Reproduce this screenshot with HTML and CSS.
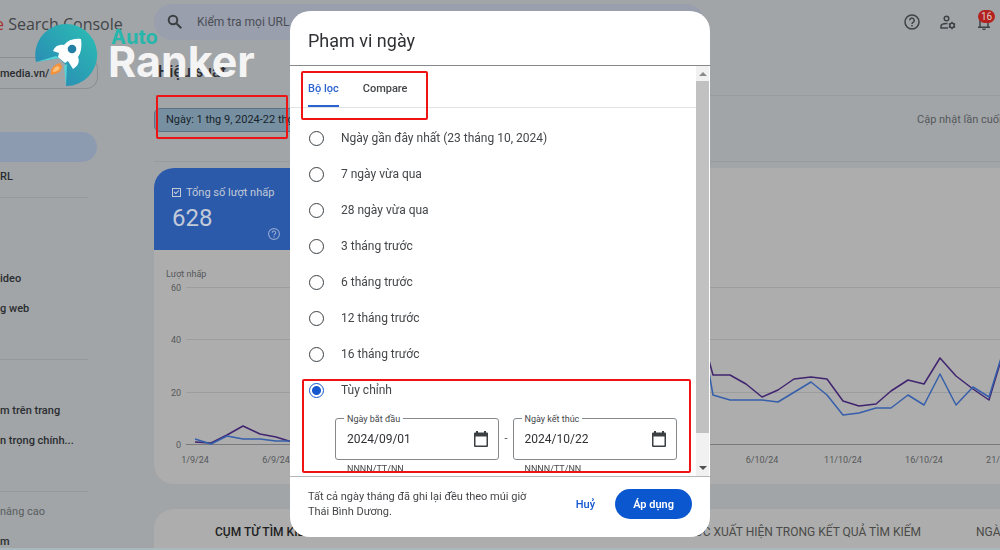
FILE: index.html
```html
<!DOCTYPE html>
<html lang="vi">
<head>
    <meta charset="UTF-8">
    <meta name="viewport" content="width=device-width, initial-scale=1.0">
    <title>Search Console</title>
    <link rel="stylesheet" href="styles.css">
</head>
<body>
    <header class="topbar">
        <div class="product"><span class="product-red">e</span> Search Console</div>
        <label class="search">
            <svg width="16" height="16" viewBox="0 0 16 16" fill="none" stroke="#3c4043" stroke-width="2"><circle cx="6" cy="6" r="4.3"/><path d="M9.3 9.3l5 5"/></svg>
            <input type="text" placeholder="Kiểm tra mọi URL" aria-label="Kiểm tra mọi URL">
        </label>
        <div class="top-icons">
            <button aria-label="Trợ giúp">
                <svg width="18" height="18" viewBox="0 0 18 18" fill="none" stroke="#3f4245" stroke-width="1.5"><circle cx="9" cy="9" r="7"/><path d="M6.8 7.4a2.2 2.2 0 1 1 3.5 1.7C9.4 9.7 9 10 9 10.9"/><path d="M9 12v1.5"/></svg>
            </button>
            <button aria-label="Người dùng">
                <svg width="18" height="18" viewBox="0 0 18 18" fill="none" stroke="#3f4245" stroke-width="1.5"><circle cx="7.5" cy="5.5" r="2.3"/><path d="M9 15H2v-1.6c0-1.8 2.5-2.9 5.5-2.9h1"/><circle cx="13" cy="12.5" r="2.2"/><path d="M13 8.8v1.5M13 14.7v1.5M9.8 10.6l1.3.8M14.9 13.6l1.3.8M9.8 14.4l1.3-.8M14.9 11.4l1.3-.8"/></svg>
            </button>
            <button class="bell" aria-label="Thông báo">
                <svg width="18" height="18" viewBox="0 0 18 18" fill="none" stroke="#3f4245" stroke-width="1.5"><path d="M3 14.2h12M5 14V8a4 4 0 0 1 8 0v6"/><path d="M7.5 16.3h3"/></svg>
                <span class="badge">16</span>
            </button>
        </div>
    </header>

    <div class="layout">
        <nav class="sidebar">
            <button class="property">media.vn/</button>
            <div class="nav-group first">
                <a class="active" href="#" aria-label="Hiệu suất"></a>
                <a href="#">RL</a>
            </div>
            <div class="nav-group">
                <a href="#">ideo</a>
                <a href="#">g web</a>
            </div>
            <div class="nav-group short">
                <a href="#">m trên trang</a>
                <a href="#">n trọng chính...</a>
            </div>
            <div class="nav-group last">
                <a class="muted" href="#">nâng cao</a>
                <a href="#">m</a>
            </div>
        </nav>

        <main class="main">
            <h1>Hiệu suất</h1>
            <div class="filters">
                <button class="chip">Ngày: 1 thg 9, 2024-22 thg 10, 2024</button>
                <span class="updated">Cập nhật lần cuối</span>
                <div class="mark mark-date"></div>
            </div>
            <section class="card">
                <div class="metric">
                    <label><input type="checkbox" checked>Tổng số lượt nhấp</label>
                    <div class="metric-value">628</div>
                    <svg class="metric-help" width="14" height="14" viewBox="0 0 18 18" fill="none" stroke="#8fa6cf" stroke-width="1.5"><circle cx="9" cy="9" r="7"/><path d="M6.8 7.4a2.2 2.2 0 1 1 3.5 1.7C9.4 9.7 9 10 9 10.9M9 12v1.5"/></svg>
                </div>
                <svg class="chart" width="900" height="234" viewBox="0 0 900 234">
                    <g stroke="#9c9d9e">
                        <path d="M32 37.5H900M32 89.5H900M32 142.5H900"/>
                        <path d="M32 194.5H900" stroke="#77797b"/>
                    </g>
                    <g class="axis-y">
                        <text class="axis-title" x="12" y="27">Lượt nhấp</text>
                        <text x="27" y="41">60</text>
                        <text x="27" y="93">40</text>
                        <text x="27" y="146">20</text>
                        <text x="27" y="198">0</text>
                    </g>
                    <g class="axis-x">
                        <text x="41" y="213">1/9/24</text>
                        <text x="122" y="213">6/9/24</text>
                        <text x="608" y="213">6/10/24</text>
                        <text x="689" y="213">11/10/24</text>
                        <text x="770" y="213">16/10/24</text>
                        <text x="851" y="213">21/10/24</text>
                    </g>
                    <g fill="none" stroke-width="1.5" stroke-linejoin="round">
                        <path stroke="#40246f" d="M41 192L57 193L73 185L89 176L106 184L122 187L138 192L543 67L559 125L576 125L592 134L608 147L624 140L640 129L657 127L673 129L689 151L705 156L722 154L737 141L754 130L770 134L786 108L802 126L819 139L835 150L851 97"/>
                        <path stroke="#365fab" d="M41 189L57 194L73 186L89 189L106 189L122 191L138 191L543 55L559 145L576 150L608 150L624 152L657 132L673 145L689 165L705 163L722 158L737 158L754 145L770 155L786 124L802 155L819 137L835 147L851 95"/>
                    </g>
                </svg>
            </section>
            <section class="card tabs-card">
                <a class="current" href="#">CỤM TỪ TÌM KIẾM</a>
                <a href="#">HÌNH THỨC XUẤT HIỆN TRONG KẾT QUẢ TÌM KIẾM</a>
                <a href="#">NGÀY</a>
            </section>
        </main>
    </div>

    <div class="watermark">
        <svg width="64" height="64" viewBox="0 0 64 64">
            <defs>
                <linearGradient id="disc" x1="1" y1="0" x2="0" y2="1">
                    <stop offset="0" stop-color="#2bc0b4"/>
                    <stop offset="1" stop-color="#2a82b4"/>
                </linearGradient>
            </defs>
            <path fill="url(#disc)" d="M2 39A31 31 0 1 1 32 63L32 42L25 35Z"/>
            <path fill="#55d3d6" d="M2 39L22 33L26 35ZM32 63L30 43L33 41Z"/>
            <path fill="#fff" d="M47 16C40 15 34 17 30 22C25 21 21 23 19 28L25 30L24 34L31 40L34 38L39 46C44 43 46 39 44 34C47 30 48 23 47 16Z"/>
            <circle cx="38" cy="26" r="4.3" fill="#247fa6"/>
            <path fill="#f7923a" d="M26 40C19 42 16 46 17 52C23 51 27 49 28 44Z"/>
            <path fill="#fbc07a" d="M24 43C20 44 19 47 19 49C22 49 25 47 26 45Z"/>
        </svg>
        <div class="brand">
            <span class="brand-auto">Auto</span>
            <span class="brand-ranker">Ranker</span>
        </div>
    </div>

    <div class="overlay">
        <form class="dialog" role="dialog" aria-labelledby="dialog-title">
            <h2 id="dialog-title">Phạm vi ngày</h2>
            <div class="dialog-body">
                <div class="dialog-content">
                    <div class="tabs">
                        <button type="button" class="tab selected">Bộ lọc</button>
                        <button type="button" class="tab">Compare</button>
                        <div class="mark mark-tabs"></div>
                    </div>
                    <div class="options">
                        <label><input type="radio" name="range">Ngày gần đây nhất (23 tháng 10, 2024)</label>
                        <label><input type="radio" name="range">7 ngày vừa qua</label>
                        <label><input type="radio" name="range">28 ngày vừa qua</label>
                        <label><input type="radio" name="range">3 tháng trước</label>
                        <label><input type="radio" name="range">6 tháng trước</label>
                        <label><input type="radio" name="range">12 tháng trước</label>
                        <label><input type="radio" name="range">16 tháng trước</label>
                    </div>
                    <div class="custom">
                        <label><input type="radio" name="range" checked>Tùy chỉnh</label>
                        <div class="dates">
                            <div class="field">
                                <label for="start">Ngày bắt đầu</label>
                                <div class="box">
                                    <input type="text" id="start" value="2024/09/01">
                                    <svg width="16" height="16" viewBox="0 0 16 16"><path fill="#3c4043" fill-rule="evenodd" d="M3 0h2v1.5h6V0h2v1.5h1a1 1 0 0 1 1 1V15a1 1 0 0 1-1 1H2a1 1 0 0 1-1-1V2.5a1 1 0 0 1 1-1h1zM2.5 5.5v9h11v-9z"/></svg>
                                </div>
                                <span class="hint">NNNN/TT/NN</span>
                            </div>
                            <span class="dash">-</span>
                            <div class="field">
                                <label for="end">Ngày kết thúc</label>
                                <div class="box">
                                    <input type="text" id="end" value="2024/10/22">
                                    <svg width="16" height="16" viewBox="0 0 16 16"><path fill="#3c4043" fill-rule="evenodd" d="M3 0h2v1.5h6V0h2v1.5h1a1 1 0 0 1 1 1V15a1 1 0 0 1-1 1H2a1 1 0 0 1-1-1V2.5a1 1 0 0 1 1-1h1zM2.5 5.5v9h11v-9z"/></svg>
                                </div>
                                <span class="hint">NNNN/TT/NN</span>
                            </div>
                        </div>
                        <div class="mark mark-custom"></div>
                    </div>
                </div>
                <div class="scrollbar" aria-hidden="true">
                    <span class="arrow up"></span>
                    <span class="thumb"></span>
                    <span class="arrow down"></span>
                </div>
            </div>
            <div class="actions">
                <p>Tất cả ngày tháng đã ghi lại đều theo múi giờ Thái Bình Dương.</p>
                <button type="button" class="cancel">Huỷ</button>
                <button type="button" class="apply">Áp dụng</button>
            </div>
        </form>
    </div>
</body>
</html>
```

FILE: styles.css
```css
* {
    box-sizing: border-box;
}

body {
    display: flex;
    flex-direction: column;
    margin: 0;
    height: 100vh;
    overflow: hidden;
    background: #a1a5a8;
    border-bottom: 2px solid #a9b8bd;
    color: #2b2d30;
    font-family: Roboto, "Noto Sans", sans-serif;
    font-size: 11px;
}

button {
    padding: 0;
    border: 0;
    background: none;
    color: inherit;
    font: inherit;
}

a {
    color: inherit;
    text-decoration: none;
}

svg {
    flex: none;
}

/* top bar */
.topbar {
    display: flex;
    align-items: center;
    flex: none;
    height: 44px;
    padding-right: 7px;
}

.product {
    width: 154px;
    padding-top: 4px;
    color: #414447;
    font-family: "Open Sans", sans-serif;
    font-size: 16px;
    white-space: nowrap;
    overflow: hidden;
    text-indent: -5px;
}

.product-red {
    color: #a8322c;
}

.search {
    display: flex;
    align-items: center;
    gap: 14px;
    width: 550px;
    height: 36px;
    padding: 0 13px;
    border-radius: 18px;
    background: #9a9fae;
}

.search input {
    flex: 1;
    padding: 0;
    border: 0;
    background: none;
    font: 12px Roboto, sans-serif;
}

.search input::placeholder {
    color: #4a4e55;
}

.top-icons {
    display: flex;
    gap: 18px;
    margin-left: auto;
}

.top-icons svg {
    display: block;
}

.bell {
    position: relative;
}

.badge {
    position: absolute;
    top: -3px;
    left: 3px;
    padding: 0 3px;
    border-radius: 7px;
    background: #b3221e;
    color: #dccac8;
    font-size: 10px;
    line-height: 13px;
}

/* page columns */
.layout {
    display: flex;
    flex: 1;
    min-height: 0;
    overflow: hidden;
}

.sidebar {
    width: 154px;
    flex: none;
    font-weight: 500;
}

.property {
    display: block;
    width: 98px;
    height: 32px;
    margin-top: 13px;
    border: 1px solid #8b8f92;
    border-left: 0;
    border-radius: 0 12px 12px 0;
    text-align: left;
}

.nav-group {
    width: 88px;
    padding: 66px 0 35px;
    border-bottom: 1px solid #96999c;
}

.nav-group.first {
    padding: 43px 0 5px;
}

.nav-group.short {
    padding-top: 36px;
}

.nav-group.last {
    padding-top: 5px;
    border: 0;
}

.nav-group a {
    display: block;
    height: 30px;
    line-height: 30px;
    white-space: nowrap;
}

.nav-group .active {
    width: 97px;
    border-radius: 0 15px 15px 0;
    background: #8d9bb1;
}

.nav-group .muted {
    color: #5a5d60;
    font-weight: 400;
}

.main {
    flex: 1;
    min-width: 0;
}

h1 {
    height: 52px;
    margin: 0;
    padding-left: 4px;
    border-bottom: 1px solid #999c9f;
    font-size: 16px;
    font-weight: 500;
    line-height: 56px;
}

.filters {
    position: relative;
    display: flex;
    align-items: center;
    justify-content: space-between;
    height: 66px;
    padding: 0 0 18px;
    border-bottom: 1px solid #999c9f;
}

.chip {
    height: 24px;
    padding: 0 11px;
    border: 1px solid #5f7280;
    border-radius: 6px;
    background: #7790a1;
    color: #17232c;
}

.updated {
    width: 83px;
    overflow: hidden;
    color: #55585b;
    white-space: nowrap;
}

.mark {
    position: absolute;
    border: 2px solid #ee1414;
    border-radius: 2px;
    pointer-events: none;
}

.mark-date {
    top: -1px;
    left: 2px;
    width: 132px;
    height: 44px;
}

/* performance card */
.card {
    margin-top: 6px;
    border-radius: 20px 0 0 20px;
    background: #adadad;
    overflow: hidden;
}

.metric {
    position: relative;
    width: 160px;
    height: 82px;
    padding: 16px 18px;
    background: #2b5aab;
    color: #c3cad8;
}

.metric label {
    display: flex;
    align-items: center;
    gap: 5px;
    height: 16px;
}

.metric input {
    appearance: none;
    position: relative;
    width: 9px;
    height: 9px;
    margin: 0;
    border: 1px solid #c3cad8;
}

.metric input::after {
    content: "";
    position: absolute;
    left: 2px;
    width: 2px;
    height: 4px;
    border: solid #c3cad8;
    border-width: 0 1px 1px 0;
    transform: rotate(45deg);
}

.metric-value {
    font-size: 24px;
    line-height: 36px;
}

.metric-help {
    position: absolute;
    left: 113px;
    bottom: 9px;
}

.chart {
    display: block;
    font-size: 9px;
    fill: #55585a;
}

.axis-y {
    text-anchor: end;
}

.axis-y .axis-title {
    text-anchor: start;
}

.axis-x {
    text-anchor: middle;
}

.tabs-card {
    display: flex;
    height: 60px;
    margin-top: 25px;
    color: #4a4a48;
    font-size: 12px;
    line-height: 46px;
    white-space: nowrap;
}

.tabs-card a {
    flex: none;
    padding-left: 55px;
}

.tabs-card .current {
    width: 438px;
    padding-left: 61px;
    color: #1d1e1f;
    font-weight: 500;
}

/* logo laid over the page */
.watermark {
    position: absolute;
    top: 23px;
    left: 34px;
    display: flex;
    gap: 10px;
}

.brand {
    display: flex;
    flex-direction: column;
    font-family: Inter, sans-serif;
    font-weight: 700;
}

.brand-auto {
    padding-left: 3px;
    color: #27b6ab;
    font-size: 20px;
    line-height: 28px;
}

.brand-ranker {
    color: #f4f4f4;
    font-size: 43px;
    line-height: 20px;
}

/* date range dialog */
.overlay {
    position: fixed;
    inset: 0;
    display: flex;
    justify-content: center;
    padding: 11px 0 13px;
}

.dialog {
    display: flex;
    flex-direction: column;
    width: 42%;
    min-width: 420px;
    border-radius: 20px;
    background: #fff;
    color: #444649;
    overflow: hidden;
}

h2 {
    flex: none;
    height: 55px;
    margin: 0;
    padding: 0 18px;
    border-bottom: 1px solid #85898c;
    color: #303134;
    font-size: 18px;
    font-weight: 400;
    line-height: 60px;
}

.dialog-body {
    flex: 1;
    min-height: 0;
    display: flex;
}

.dialog-content {
    flex: 1;
    min-width: 0;
    overflow: hidden;
}

.tabs {
    position: relative;
    display: flex;
    gap: 24px;
    height: 42px;
    padding: 0 18px;
    border-bottom: 1px solid #e2e3e5;
}

.tab {
    border-bottom: 2px solid transparent;
    padding-top: 6px;
    font-weight: 500;
}

.tab.selected {
    border-color: #2a62cf;
    color: #2a62cf;
}

.mark-tabs {
    top: 5px;
    left: 11px;
    width: 127px;
    height: 49px;
}

.options {
    padding-top: 12px;
}

.options label,
.custom > label {
    display: flex;
    align-items: center;
    gap: 17px;
    height: 36px;
    padding-left: 19px;
    font-size: 12px;
}

input[type="radio"] {
    appearance: none;
    width: 15px;
    height: 15px;
    margin: 0;
    border: 1px solid #3c4043;
    border-radius: 50%;
}

input[type="radio"]:checked {
    border-color: #1558d0;
    background: radial-gradient(#1558d0 4px, #fff 5px);
}

.custom {
    position: relative;
}

.mark-custom {
    top: 7px;
    left: 12px;
    width: 389px;
    height: 94px;
}

.dates {
    display: flex;
    gap: 5px;
    padding: 10px 19px 0 45px;
}

.field {
    position: relative;
    flex: 1;
    min-width: 0;
}

.field label {
    position: absolute;
    top: -5px;
    left: 9px;
    padding: 0 3px;
    background: #fff;
    font-size: 9px;
    line-height: 12px;
}

.box {
    display: flex;
    align-items: center;
    height: 42px;
    padding: 0 9px 0 11px;
    border: 1px solid #85898c;
    border-radius: 3px;
}

.box input {
    flex: 1;
    min-width: 0;
    padding: 0;
    border: 0;
    color: #303134;
    font: inherit;
    font-size: 12px;
}

.hint {
    display: block;
    padding: 3px 12px;
    font-size: 9px;
    line-height: 12px;
}

.dash {
    line-height: 42px;
}

.scrollbar {
    display: flex;
    flex-direction: column;
    align-items: center;
    width: 14px;
    background: #f1f1f1;
    border-right: 1px solid #fff;
}

.arrow {
    margin: 6px 0 5px;
    border: 4px solid transparent;
}

.arrow.up {
    border-top: 0;
    border-bottom-color: #8b8b8b;
}

.arrow.down {
    margin: 33px 0 6px;
    border-bottom: 0;
    border-top-color: #505050;
}

.thumb {
    flex: 1;
    width: 100%;
    background: #c1c1c1;
}

.actions {
    display: flex;
    align-items: center;
    flex: none;
    height: 61px;
    padding: 0 18px 6px;
    border-top: 1px solid #b4b6b8;
}

.actions p {
    width: 230px;
    margin: 0;
    line-height: 15px;
}

.cancel {
    margin-left: auto;
    color: #1558d0;
    font-weight: 500;
}

.apply {
    height: 30px;
    margin-left: 20px;
    padding: 0 18px;
    border-radius: 15px;
    background: #0b57d0;
    color: #fff;
    font-weight: 600;
}
```
